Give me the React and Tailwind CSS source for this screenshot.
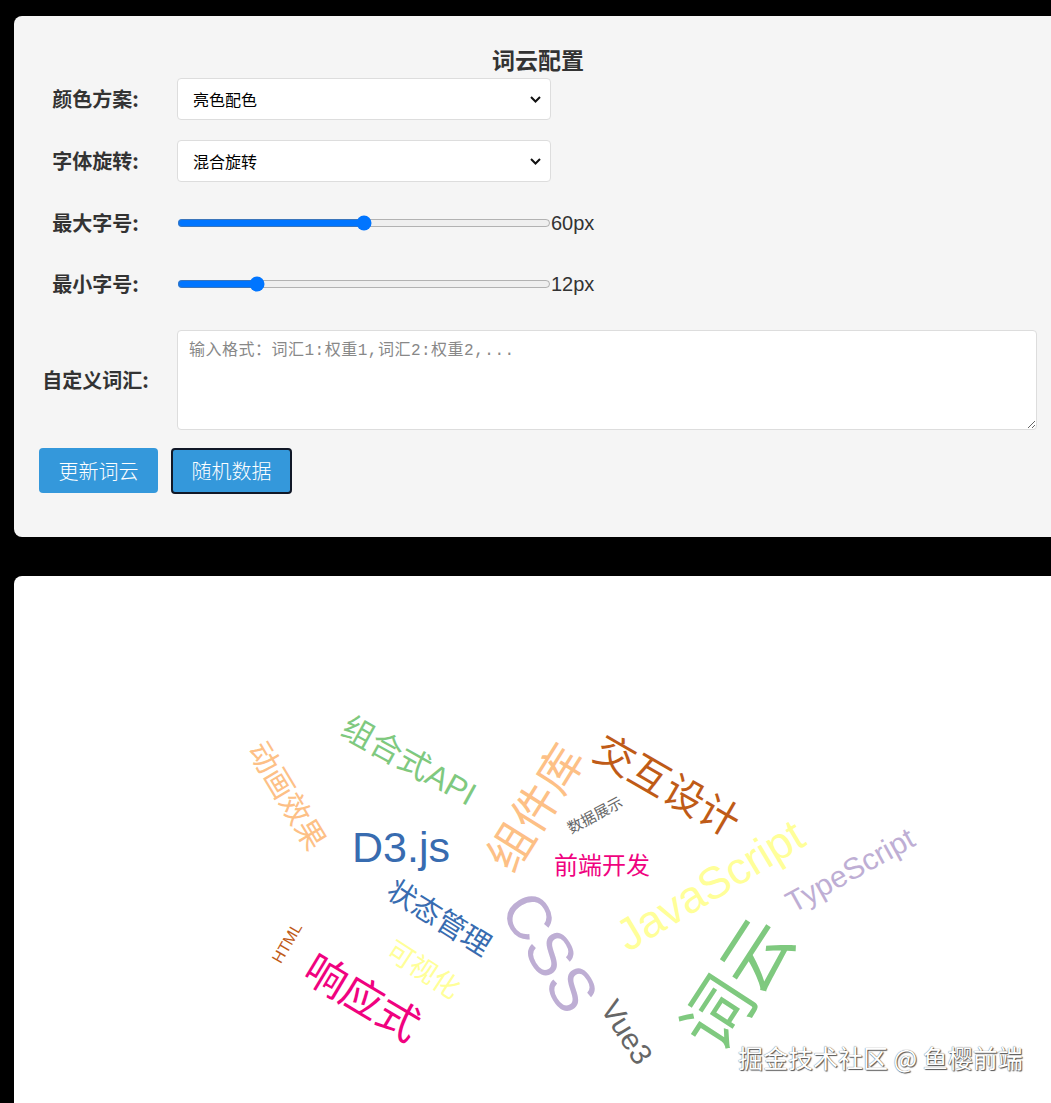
import { useState } from "react";

const words = [
    { text: "词云", x: 724, y: 409, size: 70, rotate: -57, color: "#7fc97f" },
    { text: "JavaScript", x: 696, y: 309, size: 45, rotate: -31, color: "#ffff99" },
    { text: "TypeScript", x: 836, y: 294, size: 30, rotate: -29, color: "#beaed4" },
    { text: "CSS", x: 536, y: 376, size: 62, rotate: 59, color: "#beaed4" },
    { text: "Vue3", x: 613, y: 456, size: 30, rotate: 58, color: "#666666" },
    { text: "组件库", x: 522, y: 232, size: 46, rotate: -58, color: "#fdc086" },
    { text: "交互设计", x: 653, y: 210, size: 40, rotate: 30, color: "#bf5b17" },
    { text: "数据展示", x: 581, y: 239, size: 15, rotate: -28, color: "#666666" },
    { text: "前端开发", x: 588, y: 289, size: 24, rotate: 0, color: "#f0027f" },
    { text: "D3.js", x: 387, y: 271, size: 43, rotate: 0, color: "#386cb0" },
    { text: "组合式API", x: 395, y: 185, size: 32, rotate: 29, color: "#7fc97f" },
    { text: "动画效果", x: 273, y: 220, size: 30, rotate: 59, color: "#fdc086" },
    { text: "状态管理", x: 425, y: 342, size: 29, rotate: 32, color: "#386cb0" },
    { text: "可视化", x: 409, y: 394, size: 27, rotate: 33, color: "#ffff99" },
    { text: "响应式", x: 348, y: 422, size: 42, rotate: 31, color: "#f0027f" },
    { text: "HTML", x: 273, y: 367, size: 16, rotate: -60, color: "#bf5b17" },
];

const labelCls =
    "w-[113px] shrink-0 text-center text-[20px] font-bold text-[#333] font-['Noto_Sans_CJK_SC',sans-serif]";

function Chevron() {
    return (
        <svg width="11" height="7" viewBox="0 0 11 7" className="pointer-events-none absolute right-[10px] top-[18px]">
            <path d="M1 1l4.5 4.5L10 1" fill="none" stroke="#111" strokeWidth="2" />
        </svg>
    );
}

function SelectRow({ label, value, options }) {
    return (
        <div className="mb-[20px] flex h-[42px] items-center gap-[25px]">
            <label className={labelCls}>{label}</label>
            <div className="relative w-[374px]">
                <select
                    defaultValue={value}
                    className="h-[42px] w-full appearance-none rounded-[4px] border border-[#ddd] bg-white pl-[15px] text-[16px] text-black font-['Noto_Sans_CJK_SC',sans-serif] outline-none"
                >
                    {options.map((o) => (
                        <option key={o}>{o}</option>
                    ))}
                </select>
                <Chevron />
            </div>
        </div>
    );
}

function SliderRow({ label, min, max, value }) {
    const [v, setV] = useState(value);
    return (
        <div className="mb-[19px] flex h-[42px] items-center gap-[25px]">
            <label className={labelCls}>{label}</label>
            <div className="flex items-center">
                <input
                    type="range"
                    min={min}
                    max={max}
                    value={v}
                    onChange={(e) => setV(e.target.value)}
                    className="m-0 w-[374px]"
                />
                <span className="text-[20px] text-[#333] font-['Liberation_Sans',sans-serif]">{v}px</span>
            </div>
        </div>
    );
}

export default function App() {
    return (
        <div className="relative h-[1103px] w-full overflow-hidden bg-black pl-[14px] pt-[16px]">
            {/* 配置面板 */}
            <div className="w-[1048px] rounded-lg bg-[#f5f5f5] px-[25px] pb-[43px] pt-[29px]">
                <h3 className="mb-[5px] text-center text-[23px] font-bold leading-[28px] text-[#333] font-['Noto_Sans_CJK_SC',sans-serif]">
                    词云配置
                </h3>
                <SelectRow label="颜色方案:" value="亮色配色" options={["亮色配色", "暗色配色", "彩虹配色"]} />
                <SelectRow label="字体旋转:" value="混合旋转" options={["混合旋转", "水平", "垂直"]} />
                <SliderRow label="最大字号:" min={20} max={100} value={60} />
                <SliderRow label="最小字号:" min={10} max={20} value={12} />

                <div className="mt-[25px] flex items-center gap-[25px]">
                    <label className={labelCls}>自定义词汇:</label>
                    <textarea
                        placeholder="输入格式：词汇1:权重1,词汇2:权重2,..."
                        className="h-[100px] flex-1 rounded-[4px] border border-[#ddd] bg-white px-[11px] py-[10px] text-[16px] leading-[20px] tracking-[0.5px] font-['Liberation_Mono','Noto_Sans_CJK_SC',monospace] placeholder:text-[#888] outline-none"
                    />
                </div>

                <div className="mt-[18px] flex gap-[13px]">
                    <button className="h-[45px] w-[119px] rounded-[4px] bg-[#3498db] text-[20px] text-white font-['Noto_Sans_CJK_SC',sans-serif] font-light">
                        更新词云
                    </button>
                    <button className="h-[46px] w-[121px] rounded-[4px] border-2 border-[#111827] bg-[#3498db] text-[20px] text-white font-['Noto_Sans_CJK_SC',sans-serif] font-light">
                        随机数据
                    </button>
                </div>
            </div>

            {/* 词云画布 */}
            <div className="mt-[39px] h-[560px] w-[1048px] rounded-t-lg bg-white">
                <svg width="1048" height="540" className="block">
                    {words.map((w) => (
                        <text
                            key={w.text}
                            transform={`translate(${w.x},${w.y}) rotate(${w.rotate})`}
                            textAnchor="middle"
                            dominantBaseline="central"
                            fontSize={w.size}
                            fill={w.color}
                            fontFamily="'Liberation Sans', 'Noto Sans CJK SC', sans-serif"
                        >
                            {w.text}
                        </text>
                    ))}
                </svg>
            </div>

            <div className="absolute left-[738px] top-[1040px] text-[25px] leading-[34px] text-white font-['Noto_Sans_CJK_SC',sans-serif] [text-shadow:0_0_1px_#444,1px_1px_1px_#555]">
                掘金技术社区 @ 鱼樱前端
            </div>
        </div>
    );
}
